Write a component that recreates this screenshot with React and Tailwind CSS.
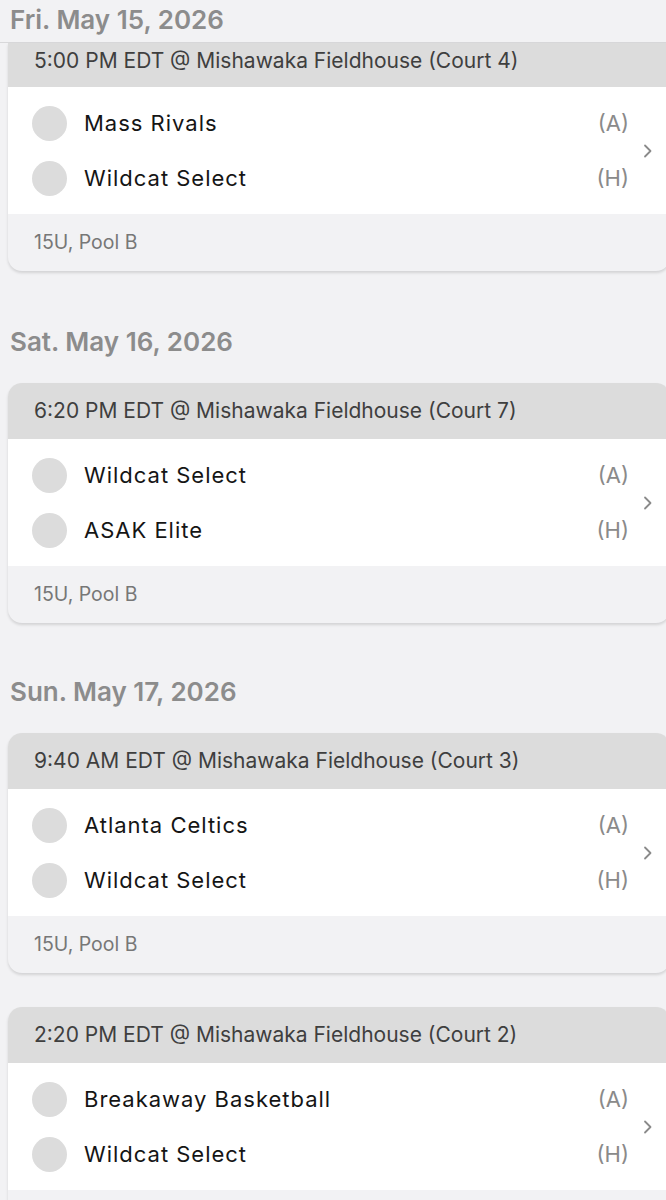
const DAYS = [
  {
    label: "Sat. May 16, 2026",
    games: [
      {
        time: "6:20 PM EDT @ Mishawaka Fieldhouse (Court 7)",
        away: "Wildcat Select",
        home: "ASAK Elite",
        pool: "15U, Pool B",
      },
    ],
  },
  {
    label: "Sun. May 17, 2026",
    games: [
      {
        time: "9:40 AM EDT @ Mishawaka Fieldhouse (Court 3)",
        away: "Atlanta Celtics",
        home: "Wildcat Select",
        pool: "15U, Pool B",
      },
      {
        time: "2:20 PM EDT @ Mishawaka Fieldhouse (Court 2)",
        away: "Breakaway Basketball",
        home: "Wildcat Select",
        pool: "15U, Pool B",
      },
    ],
  },
];

function Chevron() {
  return (
    <svg width="12" height="18" viewBox="0 0 12 18" fill="none" className="text-[#8a8a8a]">
      <path d="M3 3.5l5.5 5.5-5.5 5.5" stroke="currentColor" strokeWidth="1.8" strokeLinecap="round" strokeLinejoin="round" />
    </svg>
  );
}

function TeamRow({ name, side }) {
  return (
    <div className="flex h-[55px] items-center">
      <span className="size-[35px] shrink-0 rounded-full bg-[#dcdcdc]" />
      <span className="ml-[17px] flex-1 text-[22px] tracking-[0.045em] text-[#151515]">{name}</span>
      <span className="w-[34px] text-right text-[22px] text-[#8a8a8a]">({side})</span>
    </div>
  );
}

function GameCard({ game, clipped }) {
  return (
    <div
      className={`ml-[8px] w-[662px] overflow-hidden bg-[#f2f2f4] shadow-[0_2px_3px_rgba(0,0,0,0.13)] ${
        clipped ? "rounded-b-[14px]" : "rounded-[14px]"
      }`}
    >
      <div
        className={`flex items-center bg-[#dcdcdc] pl-[26px] text-[21px] text-[#3f3f3f] ${
          clipped ? "h-[44px] pb-[8px]" : "h-[56px]"
        }`}
      >
        {game.time}
      </div>
      <div className="flex items-center bg-white pb-[8px] pl-[24px] pr-[10px] pt-[9px]">
        <div className="flex-1">
          <TeamRow name={game.away} side="A" />
          <TeamRow name={game.home} side="H" />
        </div>
        <div className="ml-[13px] w-[18px]">
          <Chevron />
        </div>
      </div>
      <div className="flex h-[57px] items-center pl-[26px] text-[19.5px] text-[#777]">{game.pool}</div>
    </div>
  );
}

function DayLabel({ children }) {
  return <h2 className="flex h-[84px] items-center pl-[10px] text-[26px] font-semibold text-[#8c8c8c]">{children}</h2>;
}

export default function App() {
  return (
    <div className="h-[1200px] w-[666px] overflow-hidden bg-[#f2f2f4] font-['Inter',sans-serif]">
      <div className="flex h-[43px] items-center border-b border-[#d8d8da] pb-[4px] pl-[10px] text-[26px] font-semibold text-[#8c8c8c]">
        Fri. May 15, 2026
      </div>
      <GameCard
        clipped
        game={{
          time: "5:00 PM EDT @ Mishawaka Fieldhouse (Court 4)",
          away: "Mass Rivals",
          home: "Wildcat Select",
          pool: "15U, Pool B",
        }}
      />
      <div className="h-[28px]" />
      {DAYS.map((day) => (
        <div key={day.label}>
          <DayLabel>{day.label}</DayLabel>
          <div className="flex flex-col gap-[34px]">
            {day.games.map((g) => (
              <GameCard key={g.time} game={g} />
            ))}
          </div>
          <div className="h-[26px]" />
        </div>
      ))}
    </div>
  );
}
